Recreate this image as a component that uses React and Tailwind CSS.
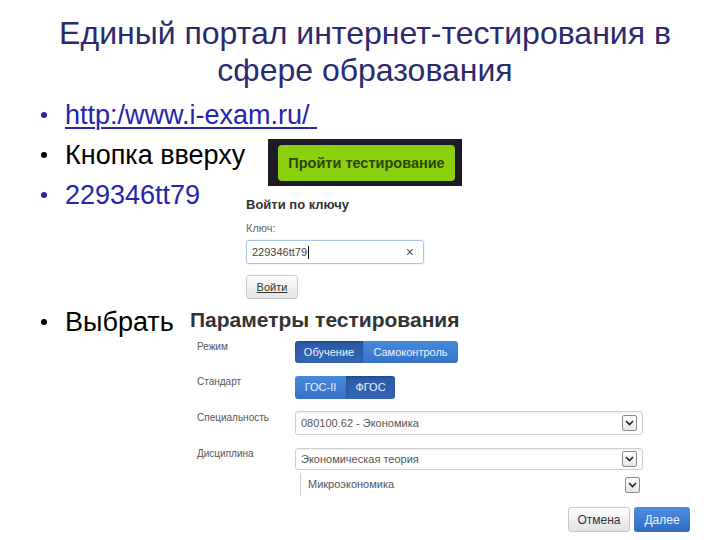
import React from "react";

function Chevron() {
  return (
    <span className="flex h-[16px] w-[15px] shrink-0 items-center justify-center rounded-[2px] border border-[#8a8a8a] bg-linear-to-b from-white to-[#e6e6e6]">
      <svg width="9" height="6" viewBox="0 0 9 6">
        <path d="M1 1 L4.5 4.6 L8 1" fill="none" stroke="#222" strokeWidth="1.6" />
      </svg>
    </span>
  );
}

function Dot({ blue }) {
  return (
    <span className="flex w-[25px] shrink-0 items-center">
      <span className={blue ? "ml-[1px] h-[6px] w-[6px] rounded-full bg-[#2424b0]" : "ml-[1px] h-[6px] w-[6px] rounded-full bg-black"} />
    </span>
  );
}

function Select({ text, h }) {
  return (
    <div className={"flex w-[348px] items-center justify-between rounded-[3px] border border-[#cfcfcf] bg-white pl-[5px] pr-[5px] text-[11px] text-[#555] shadow-[inset_0_1px_2px_rgba(0,0,0,0.08)] " + h}>
      <span>{text}</span>
      <Chevron />
    </div>
  );
}

export default function App() {
  return (
    <div className="h-[540px] w-[720px] overflow-hidden bg-white font-['Liberation_Sans',Arial,sans-serif]">
      <div className="pl-[10px] pt-[15px] text-center text-[32px] leading-[37px] text-[#2b2a6e]">
        <div>Единый портал интернет-тестирования в</div>
        <div>сфере образования</div>
      </div>

      <div className="mt-[6px] pl-[40px] text-[27px] leading-[40px]">
        <div className="flex h-[40px] items-center">
          <Dot blue />
          <span className="text-[#2424b0] underline decoration-[1.5px] underline-offset-[3px]">http:/www.i-exam.ru/{"\u00a0"}</span>
        </div>

        <div className="flex h-[40px] items-start">
          <div className="flex h-[40px] w-[228px] shrink-0 items-center text-black">
            <Dot />
            <span>Кнопка вверху</span>
          </div>
          <div className="mt-[4px] flex h-[47px] w-[194px] shrink-0 bg-[#1d1b28] pl-[10px] pr-[7px] pt-[6px]">
            <div className="flex h-[36px] w-[177px] items-center justify-center rounded-[4px] bg-[#8ccf0c] text-[14.5px] font-bold leading-none text-[#2c4607]">
              Пройти тестирование
            </div>
          </div>
        </div>

        <div className="flex items-start">
          <div className="flex h-[40px] w-[206px] shrink-0 items-center">
            <Dot blue />
            <span className="text-[#2424b0]">229346tt79</span>
          </div>
          <div className="mt-[22px] flex flex-col leading-normal">
            <div className="text-[13px] font-bold leading-[16px] text-[#333]">Войти по ключу</div>
            <div className="mt-[8px] text-[11px] leading-[14px] text-[#666]">Ключ:</div>
            <div className="mt-[5px] flex h-[24px] w-[178px] items-center justify-between rounded-[3px] border border-[#a9c6e6] bg-white pl-[5px] pr-[9px] text-[11px] text-[#444] shadow-[0_0_2px_rgba(80,140,210,0.35)]">
              <span className="flex items-center">
                229346tt79
                <span className="ml-[1px] h-[13px] w-[1px] bg-black" />
              </span>
              <span className="text-[14px] leading-none text-[#555]">×</span>
            </div>
            <div className="mt-[11px] flex h-[24px] w-[52px] items-center justify-center rounded-[3px] border border-[#c8c8c8] bg-linear-to-b from-white to-[#e4e4e4] text-[11px] text-[#333] underline">
              Войти
            </div>
          </div>
        </div>

        <div className="mt-[3px] flex items-start">
          <div className="flex h-[40px] w-[150px] shrink-0 items-center text-black">
            <Dot />
            <span>Выбрать</span>
          </div>
          <div className="mt-[6px] flex w-[500px] flex-col leading-normal">
            <div className="text-[21px] font-bold leading-[24px] text-[#333]">Параметры тестирования</div>

            <div className="mt-[9px] flex items-start">
              <div className="w-[105px] pl-[7px] text-[10px] leading-[12px] text-[#555]">Режим</div>
              <div className="flex h-[22px] overflow-hidden rounded-[3px] text-[11px] text-[#eef4ff]">
                <span className="flex w-[68px] items-center justify-center bg-linear-to-b from-[#2b5aa6] to-[#3466b6] shadow-[inset_0_1px_3px_rgba(0,0,0,0.25)]">Обучение</span>
                <span className="flex w-[95px] items-center justify-center bg-linear-to-b from-[#4688dc] to-[#3673c9]">Самоконтроль</span>
              </div>
            </div>

            <div className="mt-[13px] flex items-start">
              <div className="w-[105px] pl-[7px] text-[10px] leading-[12px] text-[#555]">Стандарт</div>
              <div className="flex h-[23px] overflow-hidden rounded-[3px] text-[11px] text-[#eef4ff]">
                <span className="flex w-[51px] items-center justify-center bg-linear-to-b from-[#4688dc] to-[#3673c9]">ГОС-II</span>
                <span className="flex w-[49px] items-center justify-center bg-linear-to-b from-[#2b5aa6] to-[#3466b6] shadow-[inset_0_1px_3px_rgba(0,0,0,0.25)]">ФГОС</span>
              </div>
            </div>

            <div className="mt-[12px] flex items-start">
              <div className="w-[105px] pl-[7px] pt-[1px] text-[10px] leading-[12px] text-[#555]">Специальность</div>
              <Select text="080100.62 - Экономика" h="h-[24px]" />
            </div>

            <div className="mt-[13px] flex items-start">
              <div className="w-[105px] pl-[7px] text-[10px] leading-[12px] text-[#555]">Дисциплина</div>
              <Select text="Экономическая теория" h="h-[22px]" />
            </div>

            <div className="mt-[3px] flex">
              <div className="w-[105px]" />
              <div className="ml-[5px] flex h-[23px] w-[343px] items-center justify-between border-l border-[#d0d0d0] pl-[7px] pr-[3px] text-[11px] text-[#555]">
                <span>Микроэкономика</span>
                <Chevron />
              </div>
            </div>

            <div className="mt-[11px] flex justify-end gap-[4px]">
              <div className="flex h-[25px] w-[62px] items-center justify-center rounded-[3px] border border-[#c8c8c8] bg-linear-to-b from-white to-[#e2e2e2] text-[12px] text-[#333]">
                Отмена
              </div>
              <div className="flex h-[25px] w-[56px] items-center justify-center rounded-[3px] bg-linear-to-b from-[#4d8ee2] to-[#2f6cc5] text-[12px] text-[#eef4ff]">
                Далее
              </div>
            </div>
          </div>
        </div>
      </div>
    </div>
  );
}
